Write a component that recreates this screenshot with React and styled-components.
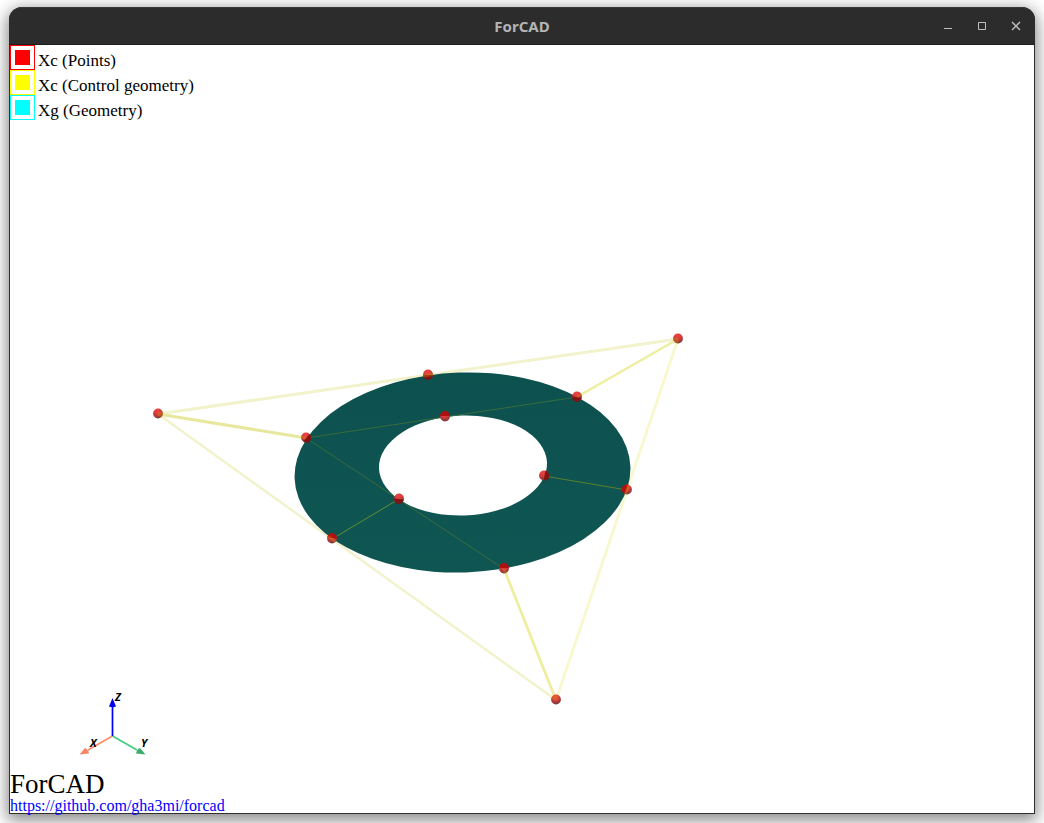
import React from "react";
import styled, { createGlobalStyle } from "styled-components";

const GlobalStyle = createGlobalStyle`
  * { box-sizing: border-box; }
  body { margin: 0; background: #fff; }
`;

const Desktop = styled.main`
  min-height: 100vh;
  display: flex;
  padding: 7px 9px 9px;
  overflow: hidden;
  background: #fff;
`;

const Window = styled.section`
  flex: 1;
  min-width: 0;
  display: flex;
  flex-direction: column;
  border-radius: 13px 13px 0 0;
  background: #2f2f2f;
  box-shadow: 0 4px 16px 2px rgba(0, 0, 0, 0.48);
`;

const TitleBar = styled.header`
  height: 38px;
  display: grid;
  grid-template-columns: 1fr auto 1fr;
  align-items: center;
  padding: 0 7px;
  border-radius: 13px 13px 0 0;
  border-top: 1px solid #383838;
  border-bottom: 1px solid #1d1d1d;
  background: #2c2c2c;
`;

const Title = styled.h1`
  grid-column: 2;
  margin: 0;
  font: bold 15px/20px "Noto Sans", "Open Sans", sans-serif;
  color: #b4b4b4;
`;

const Controls = styled.div`
  justify-self: end;
  display: flex;
  gap: 10px;
`;

const ControlButton = styled.button`
  width: 24px;
  height: 24px;
  padding: 0;
  border: 0;
  display: grid;
  place-items: center;
  background: transparent;
  color: #c0c0c0;
`;

const Viewport = styled.div`
  flex: 1;
  min-height: 0;
  display: grid;
  grid-template-rows: auto 1fr auto auto;
  margin: 0 1px 1px;
  background: #fff;
  color: #000;
  font-family: "Liberation Serif", serif;
`;

const Scene = styled.svg`
  grid-area: 1 / 1 / -1 / -1;
  width: 100%;
  height: 100%;
`;

const Legend = styled.ul`
  grid-area: 1 / 1;
  z-index: 1;
  margin: 0;
  padding: 0;
  list-style: none;
`;

const LegendItem = styled.li`
  height: 25px;
  display: flex;
  align-items: center;
  gap: 3px;
  font-size: 17px;
  line-height: 20px;
`;

const LegendText = styled.span`
  padding-top: 7px;
`;

const Swatch = styled.span`
  width: 25px;
  height: 25px;
  padding: 4px;
  border: 1px solid ${(p) => p.$color};
  background: ${(p) => p.$color} content-box;
`;

const Axes = styled.svg`
  grid-area: 3 / 1;
  z-index: 1;
  width: 76px;
  height: 70px;
  margin: 0 0 11px 66px;
  font: italic bold 11px "Open Sans", "Noto Sans", sans-serif;
`;

const Credit = styled.footer`
  grid-area: 4 / 1;
  z-index: 1;
  display: flex;
  flex-direction: column;
  align-items: flex-start;
`;

const Product = styled.h2`
  margin: 0;
  font-size: 27px;
  line-height: 27px;
  font-weight: normal;
`;

const RepoLink = styled.a`
  font-size: 16px;
  line-height: 15px;
  color: #0000ff;
  text-decoration: none;
`;

const legend = [
  ["#ff0000", "Xc (Points)"],
  ["#ffff00", "Xc (Control geometry)"],
  ["#00ffff", "Xg (Geometry)"],
];

const ring =
  "M620.4 421.6 A168 100 -2 0 1 284.6 433.4 A168 100 -2 0 1 620.4 421.6 Z M537 417.6 A84 50 -2 0 0 369 423.4 A84 50 -2 0 0 537 417.6 Z";

const outerLines = [
  [148, 369, 668, 294, "#f2f2cd", 3],
  [148, 369, 546, 655, "#f2f2cd", 2.4],
  [668, 294, 546, 655, "#f8f8ce", 2.8],
  [148, 369, 296, 393, "#e8e79e", 3],
  [668, 294, 567, 352, "#efeea0", 2.5],
  [546, 655, 494, 524, "#efeea0", 2.8],
];

const surfaceLines = [
  [296, 393, 567, 352, "#376c3c"],
  [296, 393, 494, 524, "#376c3c"],
  [322, 494, 389, 454, "#648d30"],
  [534, 431, 617, 445, "#5c7f2c"],
];

// x, y and the direction (degrees) of the side sunk into the surface
const points = [
  [148, 369], [668, 294], [546, 655],
  [418, 330, 90], [567, 352, 100], [617, 445, 200], [494, 524, 270],
  [322, 494, 280], [296, 393, 40], [435, 372, 270], [534, 431, 10], [389, 454, 95],
];

function SceneView() {
  return (
    <Scene viewBox="0 0 1024 768" role="img" aria-label="Ring geometry with control points">
      <defs>
        <radialGradient id="ball" cx="45%" cy="22%" r="80%">
          <stop offset="0" stopColor="#f54242" />
          <stop offset="0.45" stopColor="#d63c3c" />
          <stop offset="1" stopColor="#743a3a" />
        </radialGradient>
        <linearGradient id="surface" x1="0" y1="0" x2="0" y2="1">
          <stop offset="0" stopColor="#0d514f" />
          <stop offset="1" stopColor="#0f5653" />
        </linearGradient>
        <clipPath id="balls">
          {points.map(([x, y], i) => (
            <circle key={i} cx={x} cy={y} r="4.900" />
          ))}
        </clipPath>
      </defs>
      {outerLines.map(([x1, y1, x2, y2, color, width], i) => (
        <line key={i} x1={x1} y1={y1} x2={x2} y2={y2} stroke={color} strokeWidth={width} />
      ))}
      <path d={ring} fill="url(#surface)" fillRule="evenodd" />
      {surfaceLines.map(([x1, y1, x2, y2, color], i) => (
        <line key={i} x1={x1} y1={y1} x2={x2} y2={y2} stroke={color} />
      ))}
      {points.map(([x, y, sunk], i) => (
        <g key={i} transform={`translate(${x} ${y - 0.5})`}>
          <circle r="4.900" fill="url(#ball)" />
          {sunk !== undefined && (
            <path
              d="M0.500 -4.900A4.900 4.900 0 0 1 0.500 4.900Z"
              transform={`rotate(${sunk})`}
              fill={sunk > 150 ? "#ac0c0c" : "#7c1212"}
              fillOpacity="0.900"
            />
          )}
        </g>
      ))}
      <g clipPath="url(#balls)" opacity="0.300">
        {outerLines.map(([x1, y1, x2, y2, , width], i) => (
          <line key={i} x1={x1} y1={y1} x2={x2} y2={y2} stroke="#d8a000" strokeWidth={width} />
        ))}
      </g>
    </Scene>
  );
}

export default function App() {
  return (
    <>
      <GlobalStyle />
      <Desktop>
        <Window>
          <TitleBar>
            <Title>ForCAD</Title>
            <Controls>
              <ControlButton aria-label="Minimize">
                <svg width="10" height="10"><path d="M1 7.500H9" stroke="currentColor" /></svg>
              </ControlButton>
              <ControlButton aria-label="Maximize">
                <svg width="10" height="10"><path d="M1.500 1.500H8.500V8.500H1.500Z" fill="none" stroke="currentColor" /></svg>
              </ControlButton>
              <ControlButton aria-label="Close">
                <svg width="10" height="10"><path d="M1 1L9 9M9 1L1 9" stroke="currentColor" strokeWidth="1.400" /></svg>
              </ControlButton>
            </Controls>
          </TitleBar>
          <Viewport>
            <SceneView />
            <Legend>
              {legend.map(([color, label]) => (
                <LegendItem key={label}>
                  <Swatch $color={color} />
                  <LegendText>{label}</LegendText>
                </LegendItem>
              ))}
            </Legend>
            <Axes viewBox="0 0 76 70" role="img" aria-label="Axes">
              <path d="M36.500 46L12 60" stroke="#ff8c69" strokeWidth="1.700" />
              <path d="M36.500 46L61 60" stroke="#43cd80" strokeWidth="1.700" />
              <path d="M36.500 46V16" stroke="#0000ff" strokeWidth="1.700" />
              <path d="M36.500 8L40 16.500Q36.500 18 33 16.500Z" fill="#0000f0" />
              <path d="M3.500 64.500L9 58Q12 59 13 63.500Z" fill="#f58564" />
              <path d="M69.500 64.500L64 58Q61 59 60 63.500Z" fill="#3dac6d" />
              <text x="39" y="11">Z</text>
              <text x="14" y="57">X</text>
              <text x="65" y="57">Y</text>
            </Axes>
            <Credit>
              <Product>ForCAD</Product>
              <RepoLink href="https://github.com/gha3mi/forcad">https://github.com/gha3mi/forcad</RepoLink>
            </Credit>
          </Viewport>
        </Window>
      </Desktop>
    </>
  );
}
